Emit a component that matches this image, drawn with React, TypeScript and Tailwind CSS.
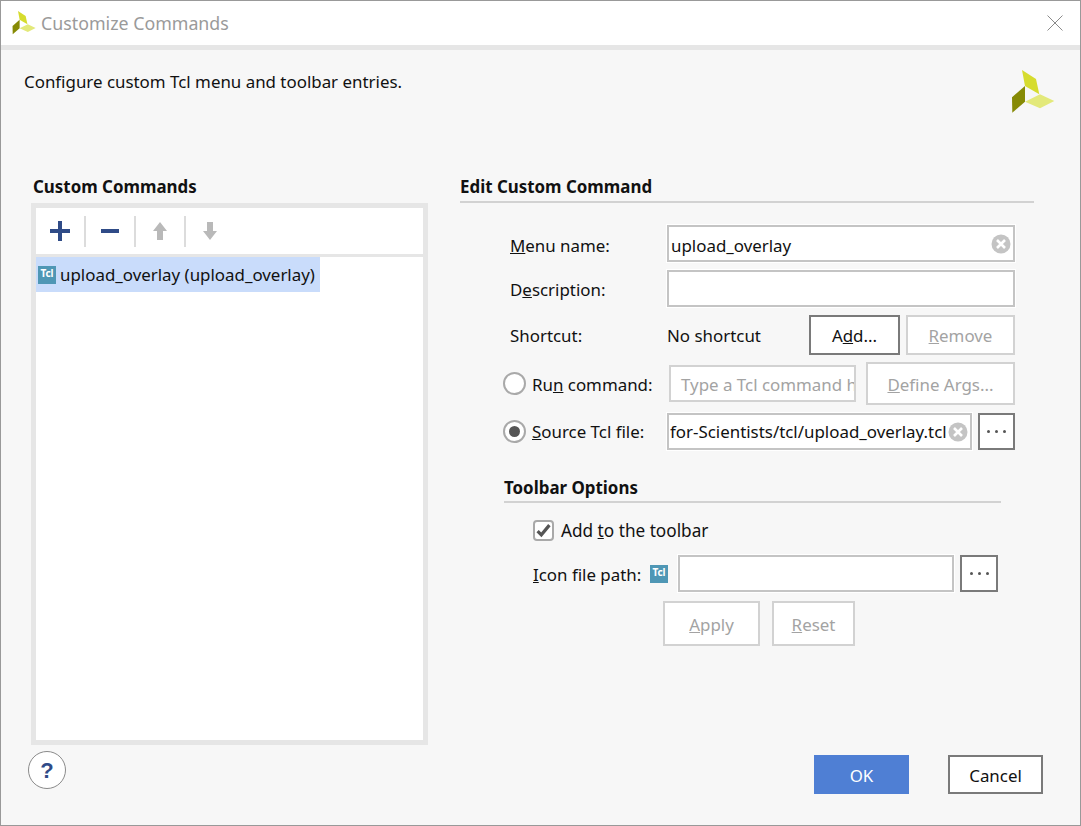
import type { ReactNode } from "react";

// Three leaf logo, used in the title bar and the banner
function Logo({ className }: { className: string }) {
  return (
    <svg viewBox="0 0 44 44" className={className}>
      <polygon points="11,0 25,9 28.3,24.3 14,16" fill="#d6dc2e" />
      <polygon points="14,31.7 29,24.3 43.3,31 29,38.3" fill="#e3e97a" />
      <polygon points="1,27.3 14,16 14,31.7 1.3,42.7" fill="#868a05" />
    </svg>
  );
}

function TclIcon() {
  return (
    <span className="flex h-[18px] w-[18px] shrink-0 items-start justify-center bg-[#4f97b5] text-[10px] leading-[14px] font-bold text-white">
      Tcl
    </span>
  );
}

function ClearIcon() {
  return (
    <svg viewBox="0 0 20 20" className="h-5 w-5 shrink-0">
      <circle cx="10" cy="10" r="9.5" fill="#c4c4c4" />
      <path d="M6 6l8 8M14 6l-8 8" stroke="#fff" strokeWidth="2.6" />
    </svg>
  );
}

function DotsButton({ className }: { className: string }) {
  return (
    <button className={`flex items-center justify-center gap-[5px] border-2 border-[#7a7a7a] bg-white ${className}`}>
      <span className="h-[3px] w-[3px] rounded-full bg-[#555]" />
      <span className="h-[3px] w-[3px] rounded-full bg-[#555]" />
      <span className="h-[3px] w-[3px] rounded-full bg-[#555]" />
    </button>
  );
}

function DisabledButton({ className, children }: { className: string; children: ReactNode }) {
  return (
    <button className={`border-2 border-[#d2d2d2] bg-white pt-[2px] text-[#a3a3a3] ${className}`}>{children}</button>
  );
}

function Radio({ checked }: { checked?: boolean }) {
  return (
    <span className="flex h-[23px] w-[23px] shrink-0 items-center justify-center rounded-full border-2 border-[#a9a9a9] bg-white">
      {checked && <span className="h-[11px] w-[11px] rounded-full bg-[#555]" />}
    </span>
  );
}

function ToolbarCell({ children, last }: { children: ReactNode; last?: boolean }) {
  return (
    <div className={`flex h-[31px] w-[50px] items-center justify-center border-r-2 ${last ? "border-transparent" : "border-[#dcdcdc]"}`}>
      {children}
    </div>
  );
}

export default function App() {
  return (
    <div className="flex h-[826px] w-[1081px] flex-col overflow-hidden border border-[#999] bg-[#f7f7f7] font-['Noto_Sans',sans-serif] text-[16.9px] text-[#111]">
      {/* Title bar */}
      <div className="flex h-[44px] shrink-0 items-center bg-white pr-[17px] pl-[11px]">
        <Logo className="h-[24px] w-[24px]" />
        <span className="ml-[5px] pt-[1px] text-[17.8px] text-[#9a9a9a]">Customize Commands</span>
        <svg viewBox="0 0 16 16" className="ml-auto h-4 w-4">
          <path d="M.5.5l15 15M15.500 .5l-15 15" stroke="#8a8a8a" strokeWidth="1" fill="none" />
        </svg>
      </div>
      <div className="h-[5px] shrink-0 bg-[#e6e6e6]" />

      {/* Banner */}
      <div className="flex h-[120px] shrink-0 justify-between pr-[25px] pl-[23px]">
        <span className="mt-[19px] h-[25px] leading-[25px]">Configure custom Tcl menu and toolbar entries.</span>
        <Logo className="mt-[20px] h-[44px] w-[44px]" />
      </div>

      <div className="flex min-h-0 flex-1">
        {/* Left panel */}
        <div className="ml-[30px] flex w-[397px] shrink-0 flex-col">
          <div className="ml-[2px] h-[33px] pt-[4px] leading-[25px] font-bold">Custom Commands</div>
          <div className="flex h-[542px] flex-col border-[5px] border-[#e6e6e6] bg-white">
            <div className="flex h-[46px] shrink-0 items-center">
              <ToolbarCell>
                <svg viewBox="0 0 20 20" className="h-5 w-5">
                  <path d="M0 10h20M10 0v20" stroke="#2f4b87" strokeWidth="4" />
                </svg>
              </ToolbarCell>
              <ToolbarCell>
                <svg viewBox="0 0 20 20" className="h-5 w-5">
                  <path d="M1 10h18" stroke="#2f4b87" strokeWidth="4" />
                </svg>
              </ToolbarCell>
              <ToolbarCell>
                <svg viewBox="0 0 16 20" className="h-5 w-4">
                  <polygon points="8,1 15,10 11,10 11,19 5,19 5,10 1,10" fill="#b9b9b9" />
                </svg>
              </ToolbarCell>
              <ToolbarCell last>
                <svg viewBox="0 0 16 20" className="h-5 w-4">
                  <polygon points="8,19 15,10 11,10 11,1 5,1 5,10 1,10" fill="#b9b9b9" />
                </svg>
              </ToolbarCell>
            </div>
            <div className="h-[3px] shrink-0 bg-[#e6e6e6]" />
            <div className="flex h-[35px] w-[284px] items-center gap-[4px] bg-[#c9dcfb] pl-[2px]">
              <TclIcon />
              <span>upload_overlay (upload_overlay)</span>
            </div>
          </div>
          <button className="mt-[6px] -ml-[3px] flex h-[38px] w-[38px] items-center justify-center rounded-full border border-[#8a8a8a] bg-white font-['Liberation_Sans',sans-serif] text-[22px] font-bold text-[#2f4b87]">
            ?
          </button>
        </div>

        {/* Right panel */}
        <div className="ml-[32px] flex min-w-0 flex-1 flex-col pr-[46px]">
          <div className="h-[33px] border-b-2 border-[#d2d2d2] pt-[4px] leading-[25px] font-bold">Edit Custom Command</div>

          <div className="mt-[22px] ml-[50px] flex h-[37px] items-center">
            <span className="w-[157px] pt-[4px]"><u>M</u>enu name:</span>
            <div className="flex h-[37px] w-[348px] items-center justify-between border-2 border-[#c4c4c4] bg-white pr-[2px] pl-[2px] shadow-[0_0_0_1px_white]">
              <span className="pt-[4px]">upload_overlay</span>
              <ClearIcon />
            </div>
          </div>

          <div className="mt-[8px] ml-[50px] flex h-[37px] items-center">
            <span className="w-[157px] pt-[2px]">D<u>e</u>scription:</span>
            <div className="h-[37px] w-[348px] border-2 border-[#c4c4c4] bg-white shadow-[0_0_0_1px_white]" />
          </div>

          <div className="mt-[8px] ml-[50px] flex h-[40px] items-center">
            <span className="w-[157px] pt-[2px]">Shortcut:</span>
            <span className="w-[142px] pt-[2px]">No shortcut</span>
            <button className="h-[40px] w-[91px] border-2 border-[#7a7a7a] bg-white pt-[2px]">
              A<u>d</u>d...
            </button>
            <DisabledButton className="ml-[6px] h-[40px] w-[109px]"><u>R</u>emove</DisabledButton>
          </div>

          <div className="mt-[7px] ml-[43px] flex h-[43px] items-center">
            <Radio />
            <span className="ml-[6px] w-[137px] pt-[2px]">Ru<u>n</u> command:</span>
            <div className="h-[37px] w-[187px] overflow-hidden border-2 border-[#d2d2d2] bg-white pl-[10px] leading-[36px] whitespace-nowrap text-[#a3a3a3]">
              Type a Tcl command here
            </div>
            <DisabledButton className="ml-[10px] h-[43px] w-[149px]"><u>D</u>efine Args...</DisabledButton>
          </div>

          <div className="mt-[8px] ml-[43px] flex h-[37px] items-center">
            <Radio checked />
            <span className="ml-[6px] w-[135px] pt-[1px]"><u>S</u>ource Tcl file:</span>
            <div className="flex h-[37px] w-[305px] items-center overflow-hidden border-2 border-[#c4c4c4] bg-white pl-[1px] whitespace-nowrap shadow-[0_0_0_1px_white]">
              <span className="min-w-0 flex-1 overflow-hidden pt-[1px]">for-Scientists/tcl/upload_overlay.tcl</span>
              <ClearIcon />
              <span className="w-[2px]" />
            </div>
            <DotsButton className="ml-[6px] h-[37px] w-[37px]" />
          </div>

          <div className="mt-[24px] ml-[44px] h-[29px] w-[497px] border-b-2 border-[#d2d2d2] pt-[1px] leading-[25px] font-bold">
            Toolbar Options
          </div>

          <div className="mt-[17px] ml-[73px] flex h-[21px] items-center">
            <span className="flex h-[21px] w-[21px] items-center justify-center rounded-[4px] border-2 border-[#a9a9a9] bg-white">
              <svg viewBox="0 0 14 14" className="h-[15px] w-[15px]">
                <path d="M1.500 7.500l3.500 3.500 7.500-9" stroke="#555" strokeWidth="3" fill="none" />
              </svg>
            </span>
            <span className="ml-[7px] pt-[1px] text-[17.200px]">Add <u>t</u>o the toolbar</span>
          </div>

          <div className="mt-[14px] ml-[73px] flex h-[37px] items-center">
            <span className="w-[117px] pt-[3px]"><u>I</u>con file path:</span>
            <TclIcon />
            <div className="ml-[10px] h-[37px] w-[276px] border-2 border-[#c4c4c4] bg-white shadow-[0_0_0_1px_white]" />
            <DotsButton className="ml-[6px] h-[37px] w-[38px]" />
          </div>

          <div className="mt-[9px] ml-[203px] flex h-[45px] gap-[12px]">
            <DisabledButton className="h-[45px] w-[97px]"><u>A</u>pply</DisabledButton>
            <DisabledButton className="h-[45px] w-[83px]"><u>R</u>eset</DisabledButton>
          </div>

          <div className="mt-[109px] ml-[354px] flex h-[39px] w-[229px] justify-between">
            <button className="h-[39px] w-[95px] bg-[#4f7fd4] pt-[2px] text-white">OK</button>
            <button className="h-[39px] w-[95px] border-2 border-[#7a7a7a] bg-white pt-[2px]">Cancel</button>
          </div>
        </div>
      </div>
    </div>
  );
}
